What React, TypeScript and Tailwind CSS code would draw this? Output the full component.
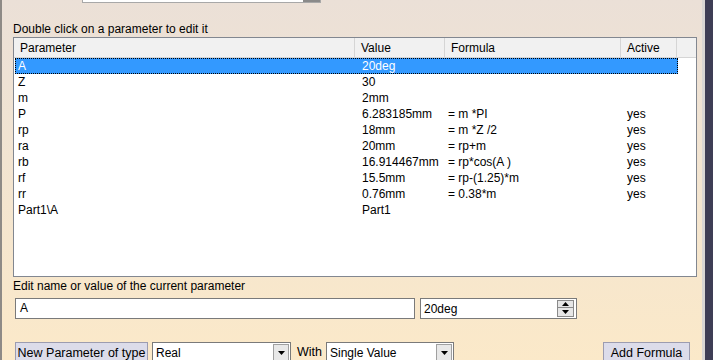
import React from "react";

const rows = [
  { p: "A", v: "20deg", f: "", a: "" },
  { p: "Z", v: "30", f: "", a: "" },
  { p: "m", v: "2mm", f: "", a: "" },
  { p: "P", v: "6.283185mm", f: "= m *PI", a: "yes" },
  { p: "rp", v: "18mm", f: "= m *Z /2", a: "yes" },
  { p: "ra", v: "20mm", f: "= rp+m", a: "yes" },
  { p: "rb", v: "16.914467mm", f: "= rp*cos(A )", a: "yes" },
  { p: "rf", v: "15.5mm", f: "= rp-(1.25)*m", a: "yes" },
  { p: "rr", v: "0.76mm", f: "= 0.38*m", a: "yes" },
  { p: "Part1\\A", v: "Part1", f: "", a: "" },
];

function DropArrow() {
  return (
    <svg width="7" height="4" viewBox="0 0 7 4">
      <path d="M0 0 H7 L3.5 4 Z" fill="#000" />
    </svg>
  );
}

function Combo({ text, width }: { text: string; width: string }) {
  return (
    <div className={`${width} h-[21px] bg-white border border-[#7a7a7a] flex items-center`}>
      <span className="flex-1 pl-[3px] leading-none">{text}</span>
      <div className="w-[16px] h-[17px] mr-[1px] bg-[#e8e8e8] border border-[#a0a0a0] flex items-center justify-center">
        <DropArrow />
      </div>
    </div>
  );
}

export default function App() {
  return (
    <div
      className="w-[713px] h-[360px] flex overflow-hidden text-[12px] text-black"
      style={{ fontFamily: '"Liberation Sans", Arial, sans-serif' }}
    >
      <div className="w-[2px] bg-[#8e8a86] shrink-0" />
      <div className="flex-1 flex flex-col bg-gradient-to-b from-[#ebe0d7] to-[#fbe9c9] relative overflow-hidden">
        {/* top combo (cut off) */}
        <div className="h-[4px] relative shrink-0">
          <div className="absolute left-[80px] bottom-[1px] w-[239px] h-[10px] bg-white border-b border-x border-[#a8a8a8] flex justify-end">
            <div className="w-[17px] h-full bg-[#8a8a8a]" />
          </div>
        </div>
        <div className="pl-[11px] mt-[18px] h-[15px] leading-[15px] shrink-0">Double click on a parameter to edit it</div>
        {/* table */}
        <div className="ml-[11px] w-[684px] h-[240px] shrink-0 border border-[#828790] bg-white flex flex-col">
          <div className="h-[20px] shrink-0 flex bg-[#f1f1f1] border-b border-[#d5d5d5]">
            <div className="w-[341px] border-r border-[#d5d5d5] pl-[6px] leading-[20px]">Parameter</div>
            <div className="w-[90px] border-r border-[#d5d5d5] pl-[6px] leading-[20px]">Value</div>
            <div className="w-[176px] border-r border-[#d5d5d5] pl-[6px] leading-[20px]">Formula</div>
            <div className="w-[56px] border-r border-[#d5d5d5] pl-[6px] leading-[20px]">Active</div>
            <div className="flex-1" />
          </div>
          <div className="flex flex-col">
            {rows.map((r, i) => (
              <div
                key={i}
                className={`h-[16px] shrink-0 flex leading-[16px] w-[663px] ml-[1px] ${
                  i === 0 ? "bg-[#3399ff] text-white outline outline-1 outline-dotted outline-black -outline-offset-1" : ""
                }`}
              >
                <div className="w-[343px] pl-[3px]">{r.p}</div>
                <div className="w-[88px] pl-[4px]">{r.v}</div>
                <div className="w-[177px] pl-[2px]">{r.f}</div>
                <div className="flex-1 pl-[4px]">{r.a}</div>
              </div>
            ))}
          </div>
        </div>
        <div className="pl-[11px] mt-[2px] h-[15px] leading-[15px] shrink-0">Edit name or value of the current parameter</div>
        <div className="flex mt-[4px] ml-[13px] gap-[5px] shrink-0">
          <div className="w-[400px] h-[21px] bg-white border border-[#7a7a7a] pl-[4px] leading-[19px]">A</div>
          <div className="w-[157px] h-[21px] bg-white border border-[#7a7a7a] flex items-center">
            <span className="flex-1 pl-[3px]">20deg</span>
            <div className="w-[17px] h-[17px] mr-[2px] flex flex-col">
              <div className="h-[8px] bg-[#e6e6e6] border border-[#8a8a8a] flex items-center justify-center">
                <svg width="7" height="4" viewBox="0 0 7 4"><path d="M0 4 H7 L3.5 0 Z" fill="#000" /></svg>
              </div>
              <div className="h-[9px] bg-[#e6e6e6] border border-[#8a8a8a] border-t-0 flex items-center justify-center">
                <DropArrow />
              </div>
            </div>
          </div>
        </div>
        <div className="flex items-start mt-[23px] ml-[13px] h-[30px] shrink-0">
          <div className="w-[133px] h-[22px] bg-[#dcdcea] border border-[#9c9cb0] leading-[20px] text-center text-[12.5px]">
            New Parameter of type
          </div>
          <div className="ml-[4px]">
            <Combo text="Real" width="w-[139px]" />
          </div>
          <span className="ml-[6px] leading-[21px] text-[12.5px]">With</span>
          <div className="ml-[4px]">
            <Combo text="Single Value" width="w-[128px]" />
          </div>
          <div className="ml-[149px] w-[87px] h-[22px] bg-[#dcdcea] border border-[#9c9cb0] leading-[20px] text-center text-[12.5px]">
            Add Formula
          </div>
        </div>
      </div>
      <div className="w-[3px] bg-[#d9d6d4] shrink-0" />
      <div className="w-[8px] bg-[#3e3d55] shrink-0" />
    </div>
  );
}
